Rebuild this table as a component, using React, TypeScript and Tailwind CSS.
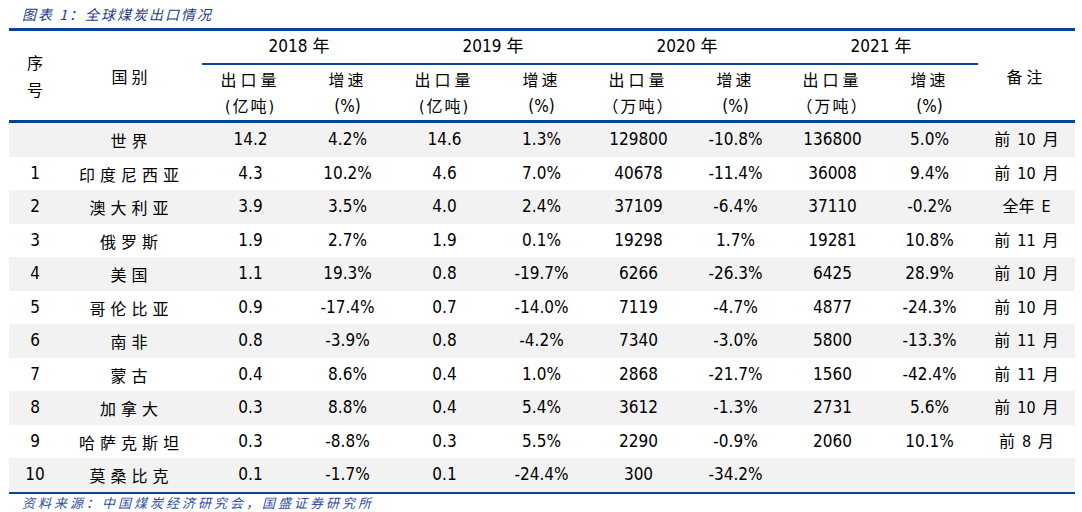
import React from 'react';

type Row = {
  no: string;
  name: string;
  cells: string[];
  note: string;
};

const rows: Row[] = [
  { no: '', name: '世界', cells: ['14.2', '4.2%', '14.6', '1.3%', '129800', '-10.8%', '136800', '5.0%'], note: '前 10 月' },
  { no: '1', name: '印度尼西亚', cells: ['4.3', '10.2%', '4.6', '7.0%', '40678', '-11.4%', '36008', '9.4%'], note: '前 10 月' },
  { no: '2', name: '澳大利亚', cells: ['3.9', '3.5%', '4.0', '2.4%', '37109', '-6.4%', '37110', '-0.2%'], note: '全年 E' },
  { no: '3', name: '俄罗斯', cells: ['1.9', '2.7%', '1.9', '0.1%', '19298', '1.7%', '19281', '10.8%'], note: '前 11 月' },
  { no: '4', name: '美国', cells: ['1.1', '19.3%', '0.8', '-19.7%', '6266', '-26.3%', '6425', '28.9%'], note: '前 10 月' },
  { no: '5', name: '哥伦比亚', cells: ['0.9', '-17.4%', '0.7', '-14.0%', '7119', '-4.7%', '4877', '-24.3%'], note: '前 10 月' },
  { no: '6', name: '南非', cells: ['0.8', '-3.9%', '0.8', '-4.2%', '7340', '-3.0%', '5800', '-13.3%'], note: '前 11 月' },
  { no: '7', name: '蒙古', cells: ['0.4', '8.6%', '0.4', '1.0%', '2868', '-21.7%', '1560', '-42.4%'], note: '前 11 月' },
  { no: '8', name: '加拿大', cells: ['0.3', '8.8%', '0.4', '5.4%', '3612', '-1.3%', '2731', '5.6%'], note: '前 10 月' },
  { no: '9', name: '哈萨克斯坦', cells: ['0.3', '-8.8%', '0.3', '5.5%', '2290', '-0.9%', '2060', '10.1%'], note: '前 8 月' },
  { no: '10', name: '莫桑比克', cells: ['0.1', '-1.7%', '0.1', '-24.4%', '300', '-34.2%', '', ''], note: '' },
];

const years = [
  { year: '2018', unit: '(亿吨)' },
  { year: '2019', unit: '(亿吨)' },
  { year: '2020', unit: '（万吨）' },
  { year: '2021', unit: '（万吨）' },
];

const cols = 'grid grid-cols-[52px_141px_97px_97px_97px_97px_97px_97px_97px_97px_97px]';

function Note({ text }: { text: string }) {
  if (!text) return <div />;
  const parts = text.split(' ');
  return (
    <div className="flex items-center justify-center gap-[7px] text-[16px]">
      {parts.map((p, i) => (
        <span key={i}>{p}</span>
      ))}
    </div>
  );
}

export default function App() {
  return (
    <div className="w-[1082px] h-[512px] bg-white font-['DejaVu_Sans_Condensed','DejaVu_Sans','Noto_Sans_CJK_SC',sans-serif] text-black">
      <div className="h-[28px] pl-[22px] flex items-center text-[14px] italic text-[#1f3c88] font-['Noto_Sans_CJK_SC',sans-serif] tracking-[2px]">
        图表 1：全球煤炭出口情况
      </div>

      <div className="ml-[9px] w-[1066px]">
        {/* header */}
        <div className={`${cols} border-t-[3px] border-b-[3px] border-[#0a4199]`}>
          <div className="row-span-2 flex flex-col items-center justify-center text-[16px] leading-[27px] font-['Noto_Sans_CJK_SC',sans-serif]">
            <span>序</span>
            <span>号</span>
          </div>
          <div className="row-span-2 flex items-center justify-center text-[16px] tracking-[4px] font-['Noto_Sans_CJK_SC',sans-serif]">
            国别
          </div>
          {years.map((y) => (
            <div key={y.year} className="col-span-2 h-[34px] flex items-center justify-center text-[17px] border-b-2 border-[#0a4199]">
              {y.year} 年
            </div>
          ))}
          <div className="row-span-2 flex items-center justify-center text-[16px] tracking-[4px] font-['Noto_Sans_CJK_SC',sans-serif]">
            备注
          </div>
          {years.map((y) => (
            <React.Fragment key={y.year + 'sub'}>
              <div className="h-[55px] flex flex-col items-center justify-center text-[16px] leading-[27px]">
                <span className="tracking-[4px] font-['Noto_Sans_CJK_SC',sans-serif]">出口量</span>
                <span className="tracking-[2px]">{y.unit}</span>
              </div>
              <div className="h-[55px] flex flex-col items-center justify-center text-[16px] leading-[27px]">
                <span className="tracking-[3px] font-['Noto_Sans_CJK_SC',sans-serif]">增速</span>
                <span className="text-[17px]">(%)</span>
              </div>
            </React.Fragment>
          ))}
        </div>

        {/* body */}
        <div className="border-b-2 border-[#0a4199]">
          {rows.map((r, i) => (
            <div
              key={r.name}
              className={`${cols} ${i % 2 === 0 ? 'bg-[#f2f2f2] h-[34px]' : 'bg-white h-[33px]'} items-center text-[17px]`}
            >
              <div className="text-center">{r.no}</div>
              <div className="text-center text-[16px] tracking-[5px] font-['Noto_Sans_CJK_SC',sans-serif]">{r.name}</div>
              {r.cells.map((c, j) => (
                <div key={j} className="text-center">{c}</div>
              ))}
              <Note text={r.note} />
            </div>
          ))}
        </div>
      </div>

      <div className="pl-[22px] h-[17px] flex items-center text-[13px] italic text-[#2e4fa3] font-['Noto_Sans_CJK_SC',sans-serif] tracking-[3px]">
        资料来源：中国煤炭经济研究会，国盛证券研究所
      </div>
    </div>
  );
}
